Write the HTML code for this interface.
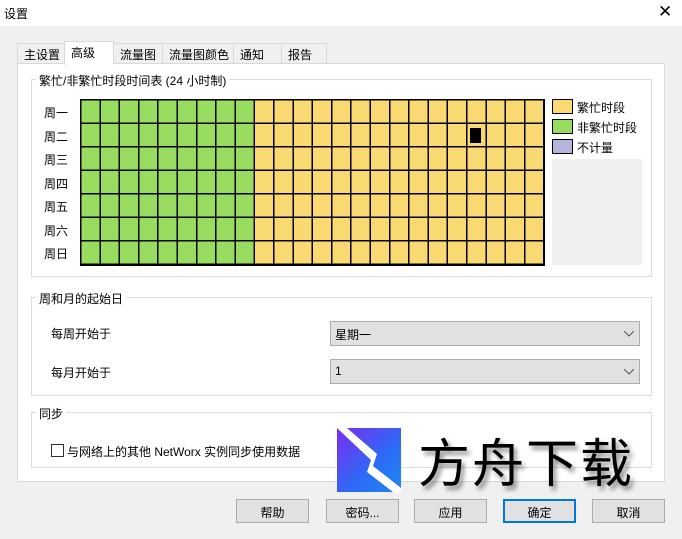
<!DOCTYPE html>
<html><head><meta charset="utf-8"><style>
*{margin:0;padding:0;box-sizing:border-box}
body{width:682px;height:539px;background:#f0f0f0;font-family:"Liberation Sans","Noto Sans CJK SC",sans-serif;font-size:12px;color:#000;position:relative;overflow:hidden}
.a{position:absolute}
.title{left:0;top:0;width:682px;height:26px;background:#fff}
.tab{top:43px;height:21px;border:1px solid #d9d9d9;border-bottom:none;background:#f0f0f0;padding:2px 0 0 6px;font-size:12px}
.pane{left:17px;top:63px;width:648px;height:419px;background:#fff;border:1px solid #d9d9d9}
.grp{border:1px solid #dcdcdc}
.gl{background:#fff;padding:0 3px;font-size:12px}
.day{left:44px;font-size:12px}
.lb{width:21px;height:15px;border:1px solid #000}
.dd{left:330px;width:310px;height:25px;background:#e1e1e1;border:1px solid #adadad;padding:4px 0 0 4px}
.dd svg{position:absolute;right:5px;top:9px}
.btn{top:499px;width:73px;height:24px;background:#e1e1e1;border:1px solid #adadad;text-align:center;padding-top:4px}
</style></head><body>
<div class="a title"></div>
<div class="a" style="left:4px;top:5px;font-size:12px">设置</div>
<div class="a" style="left:658px;top:2px;font-size:17px">✕</div>
<div class="a tab" style="left:17px;width:48px">主设置</div>
<div class="a tab" style="left:113px;width:50px">流量图</div>
<div class="a tab" style="left:162px;width:72px">流量图颜色</div>
<div class="a tab" style="left:233px;width:49px">通知</div>
<div class="a tab" style="left:281px;width:46px">报告</div>
<div class="a pane"></div>
<div class="a tab" style="left:64px;top:41px;width:50px;height:24px;background:#fff;border-color:#d9d9d9;padding-top:2px">高级</div>

<div class="a grp" style="left:31px;top:79px;width:621px;height:198px"></div>
<div class="a gl" style="left:36px;top:72px">繁忙/非繁忙时段时间表 (24 小时制)</div>
<div class="a day" style="top:104px">周一</div>
<div class="a day" style="top:128px">周二</div>
<div class="a day" style="top:151px">周三</div>
<div class="a day" style="top:175px">周四</div>
<div class="a day" style="top:198px">周五</div>
<div class="a day" style="top:222px">周六</div>
<div class="a day" style="top:245px">周日</div>
<div class="a" style="left:80px;top:99px;width:464px;height:166px;background:linear-gradient(to right,#98dc60 0 173px,#f9da72 173px);"></div>
<div class="a" style="left:80px;top:99px;width:465px;height:167px;background:repeating-linear-gradient(to right,#000 0 1.5px,transparent 1.5px 19.3px),repeating-linear-gradient(to bottom,#000 0 1.5px,transparent 1.5px 23.5px)"></div>
<div class="a" style="left:80px;top:99px;width:465px;height:167px;border-right:1.5px solid #000;border-bottom:1.5px solid #000"></div>
<div class="a" style="left:470px;top:128px;width:11px;height:15px;background:#000"></div>
<div class="a lb" style="left:552px;top:99px;background:#f9da72"></div>
<div class="a" style="left:577px;top:99px">繁忙时段</div>
<div class="a lb" style="left:552px;top:119px;background:#98dc60"></div>
<div class="a" style="left:577px;top:119px">非繁忙时段</div>
<div class="a lb" style="left:552px;top:139px;background:#b4b4dc"></div>
<div class="a" style="left:577px;top:139px">不计量</div>
<div class="a" style="left:552px;top:159px;width:90px;height:106px;background:#f0f0f0"></div>

<div class="a grp" style="left:31px;top:297px;width:621px;height:99px"></div>
<div class="a gl" style="left:36px;top:290px">周和月的起始日</div>
<div class="a" style="left:51px;top:325px">每周开始于</div>
<div class="a" style="left:51px;top:364px">每月开始于</div>
<div class="a dd" style="top:321px">星期一<svg width="10" height="6"><path d="M0 0L5 5L10 0" stroke="#555" fill="none"/></svg></div>
<div class="a dd" style="top:359px">1<svg width="10" height="6"><path d="M0 0L5 5L10 0" stroke="#555" fill="none"/></svg></div>

<div class="a grp" style="left:31px;top:412px;width:621px;height:56px"></div>
<div class="a gl" style="left:36px;top:405px">同步</div>
<div class="a" style="left:51px;top:444px;width:13px;height:13px;border:1px solid #333;background:#fff"></div>
<div class="a" style="left:67px;top:443px">与网络上的其他 NetWorx 实例同步使用数据</div>

<div class="a" style="left:337px;top:428px;width:64px;height:64px;background:linear-gradient(135deg,#7a2cf0,#2b6cf5 60%,#1e88f0);overflow:hidden">
<svg width="64" height="64"><path d="M0 0L10 0L40 26L36 38L64 60L64 64L56 64L30 44L34 32Z" fill="#fff"/></svg></div>
<div class="a" style="left:418px;top:430px;font-size:52px;line-height:60px;font-family:'Noto Sans CJK SC',sans-serif;letter-spacing:2px;text-shadow:3px 4px 5px rgba(0,0,0,.45)">方舟下载</div>

<div class="a btn" style="left:236px">帮助</div>
<div class="a btn" style="left:326px">密码...</div>
<div class="a btn" style="left:414px">应用</div>
<div class="a btn" style="left:503px;border:2px solid #0078d7;padding-top:3px">确定</div>
<div class="a btn" style="left:592px">取消</div>
</body></html>
